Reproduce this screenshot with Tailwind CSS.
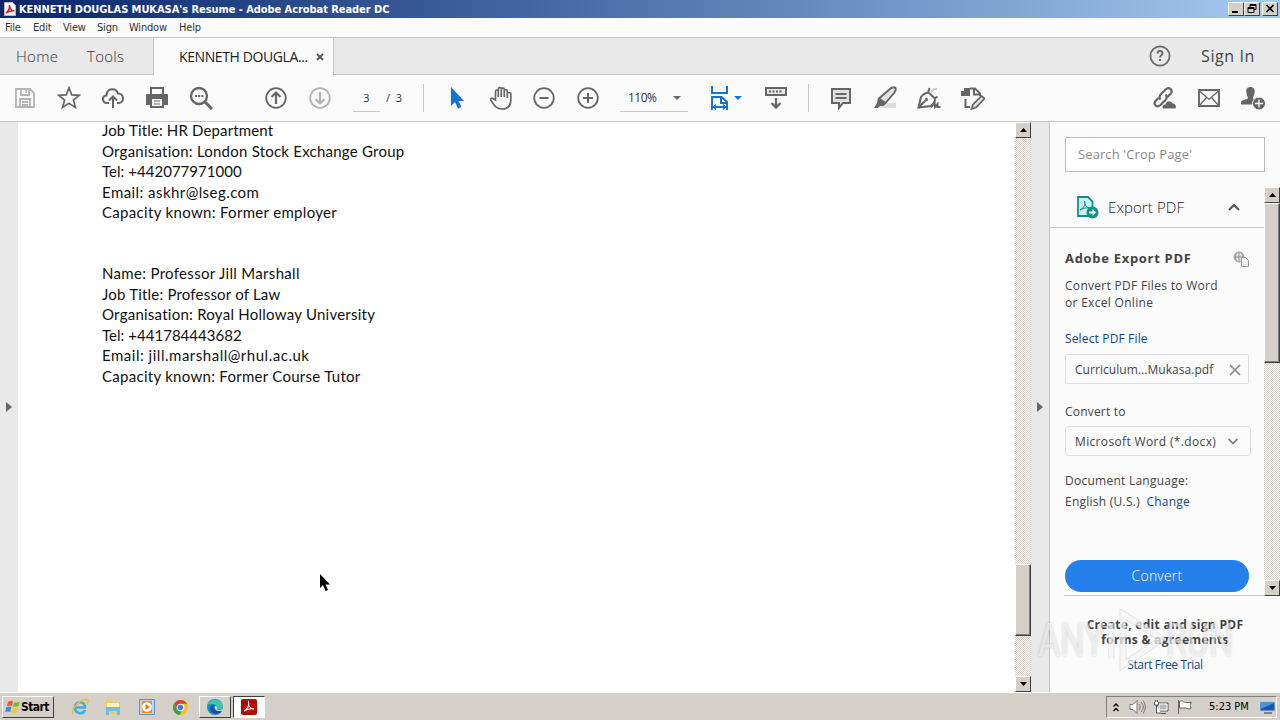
<!DOCTYPE html>
<html lang="en">
<head>
  <meta charset="UTF-8" />
  <meta name="viewport" content="width=device-width, initial-scale=1.0"/>
  <title>KENNETH DOUGLAS MUKASA's Resume - Adobe Acrobat Reader DC</title>
  <script src="https://cdn.jsdelivr.net/npm/@tailwindcss/browser@4"></script>
</head>
<body class="w-[1280px] h-[720px] overflow-hidden relative flex flex-col bg-[#fbfbfb] font-['Open_Sans',sans-serif] text-[#444] whitespace-nowrap">

  <!-- Title bar -->
  <header class="h-[18px] shrink-0 flex items-center pl-1 pr-[2px] bg-linear-to-r from-[#0a246a] to-[#a6caf0]">
    <svg class="w-3 h-4 mr-[3px]" viewBox="0 0 12 16">
      <path d="M0.5 1.500h8l3 3v10h-11z" fill="#fff" stroke="#d9aaaa"/>
      <path d="M2 12c2-1 4-5 3.500-8 0 3 2 6 5 6-3-.5-5 0-8.500 2z" fill="none" stroke="#d32020" stroke-width="1.500"/>
    </svg>
    <h1 class="text-[11px] leading-[18px] pt-px font-bold text-white font-['DejaVu_Sans_Condensed','DejaVu_Sans',sans-serif] tracking-[-0.06px]">KENNETH DOUGLAS MUKASA's Resume - Adobe Acrobat Reader DC</h1>
    <div class="ml-auto flex">
      <button class="w-4 h-[14px] bg-[#d4d0c8] border border-t-white border-l-white border-r-[#404040] border-b-[#404040]"><svg viewBox="0 0 14 12"><path d="M3 8h6v2H3z"/></svg></button>
      <button class="w-4 h-[14px] bg-[#d4d0c8] border border-t-white border-l-white border-r-[#404040] border-b-[#404040]"><svg viewBox="0 0 14 12"><path d="M5 1.500h6v5H9M5 2.500h6M5 1.500v3M3 4.500h6v5H3zM3 5.500h6" fill="none" stroke="#000"/></svg></button>
      <button class="w-4 h-[14px] ml-[2px] bg-[#d4d0c8] border border-t-white border-l-white border-r-[#404040] border-b-[#404040]"><svg viewBox="0 0 14 12"><path d="M3.500 2l7 7m0-7l-7 7" stroke="#000" stroke-width="1.600"/></svg></button>
    </div>
  </header>

  <!-- Menu bar -->
  <nav class="h-5 shrink-0 flex items-center pl-[5px] pt-[2px] border-b border-[#c6c6c6] text-[11px] text-[#333] font-['DejaVu_Sans_Condensed','DejaVu_Sans',sans-serif] tracking-[-0.2px]">
    <span class="w-7">File</span>
    <span class="w-[30px]">Edit</span>
    <span class="w-[34px]">View</span>
    <span class="w-8">Sign</span>
    <span class="w-[50px]">Window</span>
    <span>Help</span>
  </nav>

  <!-- Tabs -->
  <div class="h-[37px] shrink-0 flex bg-[#e9e9e9] text-[15px]">
    <div class="w-[154px] flex items-center pl-4 border-b border-r border-[#c6c6c6] tracking-[0.3px]">
      <span class="w-[71px] font-light text-[#333]">Home</span>
      <span class="font-light text-[#333]">Tools</span>
    </div>
    <div class="w-[179px] flex items-center bg-[#fbfbfb] pl-[25px] text-sm text-[#222]">
      <span class="w-[137px] tracking-[-0.4px]">KENNETH DOUGLA...</span>
      <svg class="size-2" viewBox="0 0 8 8"><path d="M1 1l6 6m0-6L1 7" stroke="#555" stroke-width="1.800"/></svg>
    </div>
    <div class="flex-1 flex items-center justify-end border-b border-l border-[#c6c6c6] pr-[25px]">
      <svg class="size-[22px] mr-[30px]" viewBox="0 0 22 22" fill="none" stroke="#6b6b6b"><circle cx="11" cy="11" r="9.600" stroke-width="1.800"/><path d="M8.500 8.500c0-3.500 5-3.200 5-.3 0 2-2.500 2-2.500 4.300" stroke-width="1.900"/><path d="M11 14v2" stroke-width="2"/></svg>
      <span class="text-base tracking-[0.6px]">Sign In</span>
    </div>
  </div>

  <!-- Toolbar -->
  <div class="h-[47px] shrink-0 flex items-center border-b border-[#c6c6c6] pl-[3px] pr-[6px] text-[#666]">
    <div class="w-11 flex justify-center"><svg class="size-6" viewBox="0 0 24 24" fill="none" stroke="#b4b4b4" stroke-width="1.800"><path d="M3 3h14l4 4v14H3zM8 3v6h8V3M13 4v3M7 21v-8h10v8M9 16h6M9 19h6"/></svg></div>
    <div class="w-11 flex justify-center"><svg class="size-6" viewBox="0 0 24 24" fill="none" stroke="currentColor" stroke-width="1.700"><path d="M12 1.800l2.700 7.100 7.600.4-5.900 4.700 2 7.400-6.400-4.200-6.400 4.200 2-7.400-5.900-4.700 7.600-.4z"/></svg></div>
    <div class="w-11 flex justify-center"><svg class="size-6" viewBox="0 0 24 24" fill="none" stroke="currentColor" stroke-width="2"><path d="M8 17H6c-5 0-5.500-7-.5-7.500C5.500 2 15 1 17 7.500c6-.5 7 9 1 9.500h-2M12 22V11M8 14.500l4-4 4 4"/></svg></div>
    <div class="w-[43px] flex justify-center"><svg class="size-6" viewBox="0 0 24 24"><path d="M5 1h14v7H5zM1 9q0-1 1-1h20q1 0 1 1v10h-4v-5H5v5H1z" fill="currentColor"/><path d="M7 3h10v5H7z" fill="#fbfbfb"/><path d="M5 13h14v9H5z" fill="currentColor"/><path d="M7 13h10v7H7z" fill="#fbfbfb"/><path d="M9 15h6M9 18h6" stroke="currentColor" stroke-width="1.200"/></svg></div>
    <div class="w-[45px] flex justify-center"><svg class="size-6" viewBox="0 0 24 24" fill="none" stroke="currentColor" stroke-width="2.300"><circle cx="10" cy="10" r="8"/><path d="M16 16l7 7" stroke-width="3"/><path d="M6 10h2m1.200 0h2m1.200 0h2" stroke-width="2"/></svg></div>

    <div class="w-11 ml-[31px] flex justify-center"><svg class="size-6" viewBox="0 0 24 24" fill="none" stroke="currentColor" stroke-width="1.800"><circle cx="12" cy="12" r="9.800"/><path d="M12 18V7M7.500 11L12 6.500l4.500 4.500" stroke-width="2.200"/></svg></div>
    <div class="w-11 flex justify-center"><svg class="size-6" viewBox="0 0 24 24" fill="none" stroke="#b4b4b4" stroke-width="1.800"><circle cx="12" cy="12" r="9.800"/><path d="M12 6v11M7.500 13l4.500 4.500 4.500-4.500" stroke-width="2.200"/></svg></div>
    <span class="w-[27px] h-7 ml-[11px] border-b border-[#c6c6c6] text-[11px] leading-[28px] text-center text-[#333]">3</span>
    <span class="w-[17px] ml-[6px] text-[11px] text-[#333]">/&nbsp; 3</span>
    <span class="w-px h-7 ml-5 bg-[#c6c6c6]"></span>

    <div class="w-11 ml-[11px] flex justify-center"><svg class="size-6" viewBox="0 0 24 24" fill="#1473d6"><path d="M6 1v19l4-4 3 6.500 3.500-1.500-3-6h5.500z"/></svg></div>
    <div class="w-11 flex justify-center"><svg class="size-6" viewBox="0 0 24 24" fill="none" stroke="currentColor" stroke-width="1.700"><path d="M6.500 14V5.500c0-2 2.800-2 2.800 0V11 3c0-2 3-2 3 0v8-7.500c0-2 3-2 3 0V11 5c0-2 3-2 3 0v7-4c0-2 3.500-2 3.500 0v6c0 6-3 9-9 9-5.500 0-7-3-10.800-8.500-1.200-2 1-3 2.500-1.500z"/></svg></div>
    <div class="w-11 -ml-px mr-px flex justify-center"><svg class="size-6" viewBox="0 0 24 24" fill="none" stroke="currentColor" stroke-width="1.800"><circle cx="12" cy="12" r="9.800"/><path d="M7.500 12h9" stroke-width="2"/></svg></div>
    <div class="w-11 -ml-px flex justify-center"><svg class="size-6" viewBox="0 0 24 24" fill="none" stroke="currentColor" stroke-width="1.800"><circle cx="12" cy="12" r="9.800"/><path d="M7 12h10M12 7v10" stroke-width="2"/></svg></div>
    <div class="w-[68px] h-7 ml-[10px] pl-2 flex items-center border-b border-[#c6c6c6] text-xs text-[#333]">
      <span class="w-[45px] tracking-[-0.5px]">110%</span>
      <svg class="w-2 h-1" viewBox="0 0 8 4"><path d="M0 0h8L4 4z" fill="#666"/></svg>
    </div>
    <div class="w-11 ml-[21px] flex items-center gap-[4px]"><svg class="w-[21px] h-6" viewBox="0 0 21 24" fill="none" stroke="#1473d6" stroke-width="2"><path d="M3 0v7h15V0M3 24V11h9.500l5.500 5v8M12 11v6h6M4 21h13"/><path d="M7 18.500L4.500 21 7 23.500M14 18.500l2.500 2.500-2.500 2.500" stroke-width="1.300"/></svg><svg class="w-2 h-1" viewBox="0 0 8 4"><path d="M0 0h8L4 4z" fill="#1473d6"/></svg></div>
    <div class="w-11 ml-px flex justify-center"><svg class="size-6" viewBox="0 0 24 24" fill="none" stroke="currentColor" stroke-width="2"><path d="M2 2h20v7H2z" fill="#e6e6e6"/><path d="M5 5.500h14" stroke-dasharray="2 1.500"/><path d="M12 12v9M7.500 17l4.500 4.500 4.500-4.500" stroke-width="2.300"/></svg></div>
    <span class="w-px h-7 ml-[10px] bg-[#c6c6c6]"></span>

    <div class="w-11 ml-[10px] flex justify-center"><svg class="size-6" viewBox="0 0 24 24" fill="#e0e0e0" stroke="currentColor" stroke-width="2"><path d="M3 3h18v14h-7l-4 5v-5H3z"/><path d="M6.500 8h11M6.500 12h11"/></svg></div>
    <div class="w-11 flex justify-center"><svg class="size-6" viewBox="0 0 24 24"><path d="M12 17h11v5H6z" fill="#ddd"/><path d="M17.500 2.500q1-1 2.500-1h2q1 1 .5 3l-1 2L12.500 17 6 12.500z" fill="#e0e0e0" stroke="#666" stroke-width="1.900"/><path d="M5 12l8 5.500-2.500 2.500H7l-2 2H1l3-5z" fill="#666"/></svg></div>
    <div class="w-11 flex justify-center"><svg class="size-6" viewBox="0 0 24 24" fill="none" stroke="currentColor" stroke-width="2"><path d="M1.500 21.500L4 11q3-4 7.500-4.500l6.500 6q0 5-4.500 7.500zM2 21l6.500-6.500M11 7l1.500-5M17.500 12.500l3-2" /><circle cx="9.500" cy="13.500" r="1.200" fill="#666" stroke-width="1"/><path d="M14 6l3-3h3" stroke="#ccc"/><path d="M14 21.500l3.500-5 .5 4.500 2.500-3v3h3" stroke-width="2"/></svg></div>
    <div class="w-11 flex justify-center"><svg class="size-6" viewBox="0 0 24 24"><path d="M0 5h3V2h6v8H0z" fill="#666"/><path d="M9 2.500h5l5 5V10M4.500 13v8H9M13 3v5.500h6" fill="none" stroke="#666" stroke-width="2"/><path d="M20.500 10l3 2.500-8.500 9-4.500 1.500 1.500-4.500z" fill="#e0e0e0" stroke="#666" stroke-width="1.700"/></svg></div>

    <div class="w-11 ml-auto flex justify-center"><svg class="size-6" viewBox="0 0 24 24" fill="none" stroke="currentColor" stroke-width="2.200"><path d="M8.500 13.500c-2-2-.5-4.500 1-6l4-4c4-3.500 8 1 5 4.500l-3 3M13.500 8.500c2 2 1 4.500-.5 6l-4.500 4.500c-4 3.500-7.500-1-5-4l3-3"/><path d="M11 22.500c-1.500-2.500.5-4.500 2.500-4 1-5 6.500-3.500 7-1 3 0 4 2.500 3 5z" fill="currentColor" stroke="none"/></svg></div>
    <div class="w-[45px] flex justify-center"><svg class="size-6" viewBox="0 0 24 24" fill="none" stroke="currentColor"><path d="M2 4h20v16H2z" stroke-width="1.900"/><path d="M2 4.500l10 9 10-9M2 20l7.500-8.500M22 20l-7.500-8.500" stroke-width="1.300"/></svg></div>
    <div class="w-[43px] flex justify-center"><svg class="size-6" viewBox="0 0 24 24"><path d="M9.500 1c3.500 0 5 3 4 6.500-.5 2-1.500 3-1.500 5l4 2v4H0v-2c0-3 6-2.500 7-4.500C6.500 10 5.500 9 5.500 7 4.500 3 6.500 1 9.500 1z" fill="#666"/><circle cx="18" cy="17.500" r="6.500" fill="#666" stroke="#fbfbfb"/><path d="M18 13.500v8M14 17.500h8" stroke="#fff" stroke-width="1.300"/></svg></div>
  </div>

  <!-- Document and tools panel -->
  <main class="h-[570px] shrink-0 flex">
    <div class="w-[18px] flex items-center pl-[6px] bg-[#e9e9e9]">
      <svg class="w-[6px] h-[10px]" viewBox="0 0 6 10"><path d="M0 0l6 5-6 5z" fill="#666"/></svg>
    </div>

    <article class="w-[997px] bg-white pl-[84px] text-[15px] leading-[20.500px] text-[#111] font-['Lato',sans-serif]">
      <div class="-mt-[2px]">
        <p class="tracking-[0.15px]">Job Title: HR Department</p>
        <p class="tracking-[0.23px]">Organisation: London Stock Exchange Group</p>
        <p class="tracking-[0.03px]">Tel: +442077971000</p>
        <p class="tracking-[0.44px]">Email: askhr@lseg.com</p>
        <p class="tracking-[0.32px]">Capacity known: Former employer</p>
      </div>
      <div class="mt-[40.500px]">
        <p class="tracking-[0.32px]">Name: Professor Jill Marshall</p>
        <p class="tracking-[0.2px]">Job Title: Professor of Law</p>
        <p class="tracking-[0.25px]">Organisation: Royal Holloway University</p>
        <p class="tracking-[0.03px]">Tel: +441784443682</p>
        <p class="tracking-[0.52px]">Email: jill.marshall@rhul.ac.uk</p>
        <p class="tracking-[0.28px]">Capacity known: Former Course Tutor</p>
      </div>
    </article>

    <!-- Document scrollbar -->
    <div class="w-4 flex flex-col bg-[repeating-conic-gradient(#d4d0c8_0_25%,#ffffff_0_50%)] bg-[length:2px_2px]">
      <div class="h-4 flex items-center justify-center bg-[#d4d0c8] border border-t-white border-l-white border-r-[#404040] border-b-[#404040]"><svg class="w-[7px] h-1" viewBox="0 0 7 4"><path d="M3.500 0L7 4H0z"/></svg></div>
      <div class="h-[72px] mt-[426px] bg-[#d4d0c8] border border-t-white border-l-white border-r-[#404040] border-b-[#404040] shadow-[inset_-1px_-1px_#808080]"></div>
      <div class="h-4 mt-auto flex items-center justify-center bg-[#d4d0c8] border border-t-white border-l-white border-r-[#404040] border-b-[#404040]"><svg class="w-[7px] h-1" viewBox="0 0 7 4"><path d="M0 0h7L3.500 4z"/></svg></div>
    </div>

    <div class="w-[19px] flex items-center pl-[6px] bg-[#e9e9e9] border-r border-[#c6c6c6]">
      <svg class="w-[6px] h-[10px]" viewBox="0 0 6 10"><path d="M0 0l6 5-6 5z" fill="#666"/></svg>
    </div>

    <aside class="w-[230px] flex flex-col bg-[#fbfbfb]">
      <div class="h-[35px] mt-[15px] ml-[15px] w-[200px] shrink-0 flex items-center pl-3 pt-px bg-white border border-[#bdbdbd] text-[13px] tracking-[0.1px] text-[#8a8a8a]">Search 'Crop Page'</div>

      <div class="mt-[15px] h-[409px] shrink-0 flex">
        <div class="w-[214px] flex flex-col">
          <div class="h-[41px] shrink-0 flex items-center pl-[26px] border-b border-[#c6c6c6]">
            <svg class="w-[23px] h-6 mr-[9px]" viewBox="0 0 23 24"><path d="M2 2h10l4.500 4.500V21H2z" fill="#c9f1f0" stroke="#118f8b" stroke-width="1.800"/><path d="M4 15c4-2 6-6 4.500-9 0 4 2 7 6 7-4-.5-7 0-10.500 2z" fill="none" stroke="#118f8b"/><circle cx="16.500" cy="17.500" r="6" fill="#118f8b"/><path d="M13 16.500h3.500V14l3.500 3.500-3.500 3.500v-2.500H13z" fill="#fff"/></svg>
            <span class="w-[120px] pt-px text-[15px] font-light tracking-[0.1px] text-[#222]">Export PDF</span>
            <svg class="w-3 h-2" viewBox="0 0 12 8"><path d="M1 7l5-5 5 5" fill="none" stroke="#555" stroke-width="2.200"/></svg>
          </div>
          <div class="pl-[15px] text-xs">
            <div class="mt-[21px] h-[20px] flex items-center">
              <span class="w-[168px] text-[13px] font-bold tracking-[0.7px]">Adobe Export PDF</span>
              <svg class="size-4" viewBox="0 0 16 16" fill="none" stroke="#999"><circle cx="6" cy="6" r="5" fill="#ddd"/><path d="M1 6h10M6 1v10M3.500 2c-1.500 3-1.500 5 0 8M8.500 2c1.500 2 1.500 4 1 6"/><path d="M8.500 6.500h4l3 3v6h-7z" fill="#eee"/></svg>
            </div>
            <p class="mt-[8px] leading-[17px] tracking-[0.3px]">Convert PDF Files to Word<br>or Excel Online</p>
            <p class="mt-[19px] h-[18px] leading-[18px] text-[#0d4a8c] tracking-[0.15px]">Select PDF File</p>
            <div class="mt-[6px] w-[184px] h-[30px] flex items-center pl-[9px] pt-px border border-[#dedede] rounded-xs">
              <span class="w-[154px] tracking-[0.05px]">Curriculum...Mukasa.pdf</span>
              <svg class="size-3" viewBox="0 0 12 12"><path d="M1 1l10 10m0-10L1 11" stroke="#888" stroke-width="1.700"/></svg>
            </div>
            <p class="mt-[19px] h-[18px] leading-[18px] tracking-[0.2px]">Convert to</p>
            <div class="mt-[5px] w-[186px] h-[30px] flex items-center pl-[9px] pt-px border border-[#dedede] rounded-sm">
              <span class="w-[153px] tracking-[0.35px]">Microsoft Word (*.docx)</span>
              <svg class="w-[10px] h-[7px]" viewBox="0 0 10 7"><path d="M0.500 1L5 5.500 9.500 1" fill="none" stroke="#888" stroke-width="1.800"/></svg>
            </div>
            <p class="mt-[14px] h-[21px] leading-[21px] tracking-[0.25px]">Document Language:</p>
            <p class="h-[21px] leading-[21px] tracking-[0.25px]"><span>English (U.S.)</span> <span class="ml-[3px] text-[#0d4a8c]">Change</span></p>
            <button class="block mt-12 w-[184px] h-8 rounded-full bg-[#2680eb] text-sm font-light tracking-[0.2px] text-white">Convert</button>
          </div>
          <div class="mt-auto ml-[14px] h-px bg-[#c6c6c6]"></div>
        </div>
        <!-- Panel scrollbar -->
        <div class="w-4 flex flex-col bg-[repeating-conic-gradient(#d4d0c8_0_25%,#ffffff_0_50%)] bg-[length:2px_2px]">
          <div class="h-4 flex items-center justify-center bg-[#d4d0c8] border border-t-white border-l-white border-r-[#404040] border-b-[#404040]"><svg class="w-[7px] h-1" viewBox="0 0 7 4"><path d="M3.500 0L7 4H0z"/></svg></div>
          <div class="h-[160px] bg-[#d4d0c8] border border-t-white border-l-white border-r-[#404040] border-b-[#404040] shadow-[inset_-1px_-1px_#808080]"></div>
          <div class="h-4 mt-auto flex items-center justify-center bg-[#d4d0c8] border border-t-white border-l-white border-r-[#404040] border-b-[#404040]"><svg class="w-[7px] h-1" viewBox="0 0 7 4"><path d="M0 0h7L3.500 4z"/></svg></div>
        </div>
      </div>

      <div class="mt-[21px] text-center text-xs leading-[15px]">
        <p class="font-bold tracking-[0.3px]">Create, edit and sign PDF<br>forms &amp; agreements</p>
        <p class="mt-[10px] text-[#0d4a8c] tracking-[-0.4px]">Start Free Trial</p>
      </div>
    </aside>
  </main>

  <!-- Taskbar -->
  <footer class="h-7 shrink-0 flex items-center pt-px pl-[2px] pr-[3px] bg-[#d4d0c8] border-t border-white font-['DejaVu_Sans_Condensed','DejaVu_Sans',sans-serif]">
    <button class="w-[52px] h-[22px] flex items-center pl-[2px] border border-t-white border-l-white border-r-[#404040] border-b-[#404040] text-xs font-bold text-black tracking-[-0.6px]">
      <svg class="size-4 shrink-0" viewBox="0 0 16 16"><path d="M3 3q2.500-2 5-.5L6.800 7Q4.500 6 1.800 7z" fill="#e8572a"/><path d="M9 3q2.500 1.300 6-.5L13.500 7Q10.500 8.500 7.800 7.300z" fill="#7cb82f"/><path d="M1.500 8q2.500-1 5 0l-1.300 5Q3 12 .2 13z" fill="#3b8ede"/><path d="M7.500 8.500q2.500 1.200 5.800-.2L12 13q-3 1.500-5.800.3z" fill="#f8c52c"/></svg>
      Start
    </button>
    <svg class="ml-[17px] size-[18px]" viewBox="0 0 18 18" fill="none"><path d="M14 12c-2 5-10 4-10-2.500C4 2.500 14 2.500 14 9.500H5" stroke="#3bb0e8" stroke-width="2.600"/><path d="M2 16C-1 12 10 0 16 1.500c2 .5 1 3-.5 5" stroke="#eebd3c" stroke-width="1.500"/></svg>
    <svg class="ml-[15px] size-[18px]" viewBox="0 0 18 18"><path d="M2 2h6l1 2h7v12H2z" fill="#e9cb67"/><path d="M3 5h12v5H3z" fill="#fff3b5"/><path d="M2 9h14v8h-3v-4H5v4H2z" fill="#77bce0"/></svg>
    <svg class="ml-[16px] size-[18px]" viewBox="0 0 18 18"><path d="M1.500 1.500h15v15h-15z" fill="#b7d8f2" stroke="#5a94c8"/><path d="M4 3h10v12H4z" fill="#f28a1c"/><circle cx="9" cy="9" r="4.800" fill="#fff"/><path d="M7.500 6l4.500 3-4.500 3z" fill="#e8720c"/></svg>
    <svg class="ml-4 size-[17px]" viewBox="0 0 18 18"><circle cx="9" cy="9" r="8" fill="#fbc116"/><path d="M2.100 5A8 8 0 0 1 16 5H9L6 11z" fill="#e33b2e"/><path d="M2.100 5L6 11l4 2-2 4A8 8 0 0 1 2.100 5z" fill="#34a350"/><circle cx="9" cy="9" r="4" fill="#fff"/><circle cx="9" cy="9" r="3" fill="#3b7de9"/></svg>
    <div class="ml-[10px] w-8 h-[22px] flex items-center justify-center border border-t-white border-l-white border-r-[#404040] border-b-[#404040]"><svg class="size-4" viewBox="0 0 16 16"><circle cx="8" cy="8" r="8" fill="#1785cf"/><path d="M.5 6C2 0 13-2 16 6c.5 4-3 5-6 4.500 2-4-4-7-9.500-4.500z" fill="#42c5a4"/><path d="M10 10.500C6 11 5 7 8 6c-5-1-6.500 6-2 8 4 2 8 0 9-2-1.500.5-3.500 0-5-1.500z" fill="#11539f"/><path d="M8.500 7c2 0 2 2 1.500 3.500 2 1 4 .6 6-.5v2h-5.500C8 11 7 8.500 8.500 7z" fill="#d4d0c8"/></svg></div>
    <div class="ml-[2px] w-8 h-[22px] flex items-center justify-center bg-white border border-t-[#404040] border-l-[#404040] border-r-white border-b-white"><svg class="size-4" viewBox="0 0 16 16"><rect width="16" height="16" rx="2" fill="#b30b00"/><path d="M3 12c3-1 6-6 4.500-9-.5 4 2 7 5.500 7-3.500-1-6 0-10 2z" fill="none" stroke="#fff" stroke-width="1.100"/></svg></div>

    <div class="ml-auto w-[171px] h-[22px] flex items-center pl-[6px] border border-t-[#808080] border-l-[#808080] border-r-white border-b-white">
      <svg class="w-[6px] h-[9px]" viewBox="0 0 6 9"><path d="M.5 3.500L3 1l2.500 2.500M.5 8L3 5.500 5.500 8" fill="none" stroke="#000" stroke-width="1.300"/></svg>
      <svg class="ml-[10px] w-[17px] h-4" viewBox="0 0 17 16" fill="none" stroke="#777"><path d="M1 5.500h3l4-4v13l-4-4H1z" fill="#fff"/><path d="M10 5c1.500 2 1.500 4 0 6M12 3c3 3 3 7 0 10M14 1.500c3 4 3 9 0 13"/></svg>
      <svg class="ml-[7px] size-4" viewBox="0 0 16 16"><path d="M5 4h10v8H5zM8 14.500h5" fill="#b8b8b8" stroke="#555"/><path d="M6 5h8v6H6z" fill="none" stroke="#fff"/><path d="M1.500 3v3h4V3M2.500 1v2m2-2v2M3.500 6v8H8" fill="#fff" stroke="#555"/></svg>
      <svg class="ml-2 size-4" viewBox="0 0 16 16"><path d="M2.500 2.500c3-2 4 1 6 1h6c-2 2-1 4-.5 6-3 1.500-5-1.500-8-.5H2.500z" fill="#fff" stroke="#666"/><path d="M1.500 1v14" stroke="#666"/></svg>
      <span class="ml-4 w-[44px] pt-px text-[11px] text-black">5:23 PM</span>
      <svg class="ml-[7px] w-[15px] h-[13px]" viewBox="0 0 15 13"><path d="M0 1h15v9H0z" fill="#1558b8" stroke="#a8c9ee"/><path d="M1 2h13L1 8z" fill="#4a91dc"/><path d="M4 12h8" stroke="#333"/></svg>
    </div>
  </footer>

  <!-- Watermark over the panel's lower part -->
  <div class="absolute left-[1038px] top-[608px] w-[200px] h-16 flex items-center text-[46px] leading-none text-white/60 font-['Roboto',sans-serif] [text-shadow:0_0_3px_#0003]">
    <span class="w-[70px] origin-left scale-x-[0.74]">ANY</span>
    <svg class="w-[58px] h-[62px] shrink-0" viewBox="0 0 58 62" fill="none"><path d="M3 14v36M15 5v51l39-26z" stroke="#999" stroke-opacity=".22" stroke-width="7"/><path d="M3 14v36M15 5v51l39-26z" stroke="#fff" stroke-opacity=".65" stroke-width="5"/></svg>
    <span class="origin-left scale-x-[0.74]">RUN</span>
  </div>

  <!-- Mouse pointer -->
  <svg class="absolute left-[319px] top-[573px] w-3 h-[19px]" viewBox="0 0 12 19"><path d="M1 1v14l3-3 2.500 6 2.500-1-2.500-5.500H11z"/></svg>
</body>
</html>
